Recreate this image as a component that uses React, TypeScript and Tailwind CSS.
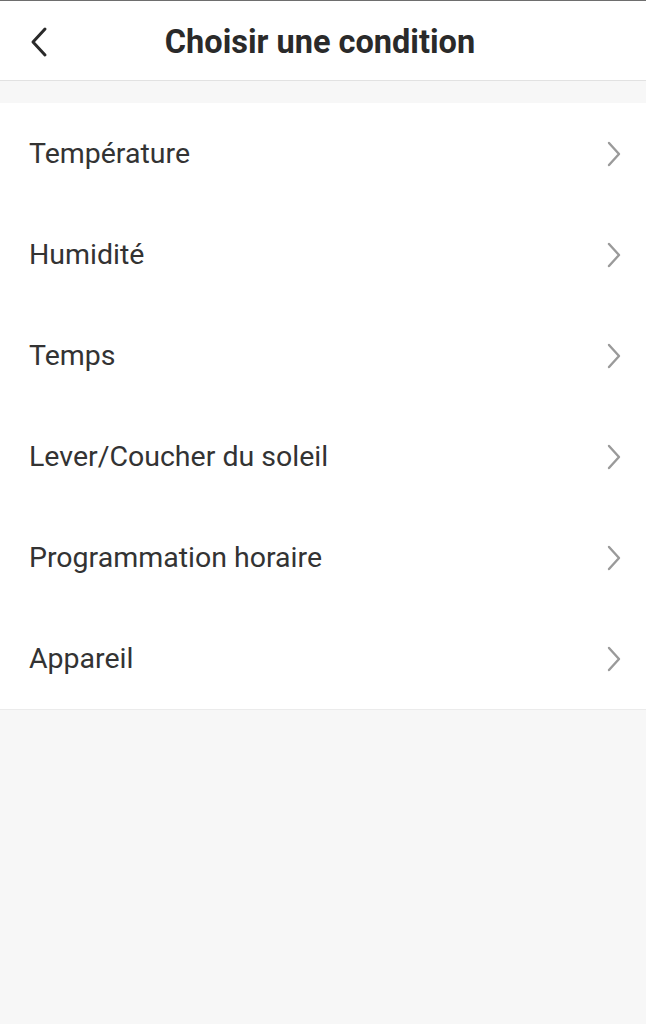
const items = [
  "Température",
  "Humidité",
  "Temps",
  "Lever/Coucher du soleil",
  "Programmation horaire",
  "Appareil",
]

function ChevronRight() {
  return (
    <svg width="16" height="26" viewBox="0 0 16 26" fill="none">
      <path d="M3 2 L13 13 L3 24" stroke="#9a9a9a" strokeWidth="2.4" strokeLinecap="round" strokeLinejoin="round" />
    </svg>
  )
}

export default function App() {
  return (
    <div className="min-h-screen bg-[#f7f7f7] font-['Roboto',sans-serif]">
      {/* Header */}
      <div className="h-[81px] bg-white border-t border-[#6e6e6e] border-b border-b-[#e2e2e2] flex items-center relative">
        <button className="absolute left-[26px] top-[24px] w-[26px] h-[34px] flex items-center justify-center">
          <svg width="20" height="32" viewBox="0 0 20 32" fill="none">
            <path d="M16 3 L4 16 L16 29" stroke="#2a2a2a" strokeWidth="3" strokeLinecap="round" strokeLinejoin="round" />
          </svg>
        </button>
        <h1 className="flex-1 text-center text-[32.5px] font-bold text-[#2a2a2a] pr-[6px] pt-[4px]">
          Choisir une condition
        </h1>
      </div>

      {/* List */}
      <div className="mt-[22px] bg-white border-b border-[#ebebeb]">
        {items.map((item) => (
          <div key={item} className="h-[101px] flex items-center justify-between pl-[29px] pr-[24px]">
            <span className="text-[28.5px] text-[#333333] pt-[2px]">{item}</span>
            <ChevronRight />
          </div>
        ))}
      </div>
    </div>
  )
}
